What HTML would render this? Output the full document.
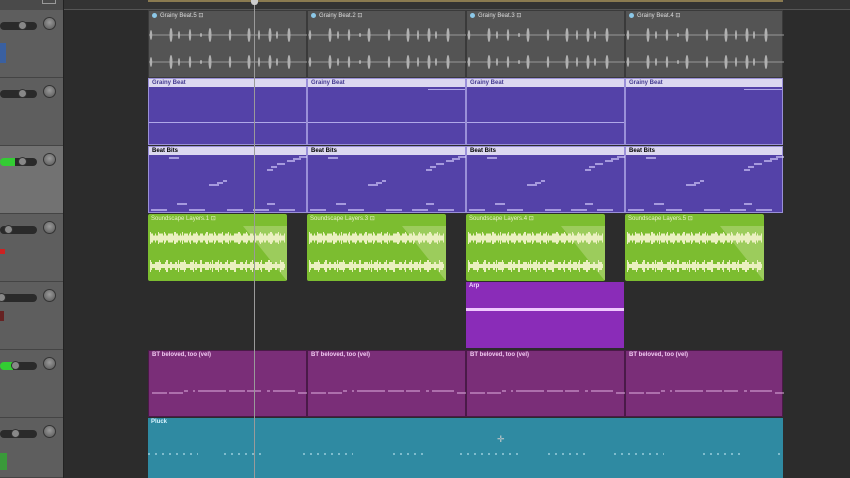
<!DOCTYPE html>
<html><head><meta charset="utf-8"><style>
body{margin:0;width:850px;height:478px;overflow:hidden;background:#2c2c2c;font-family:"Liberation Sans",sans-serif;position:relative}
div{position:absolute;box-sizing:border-box}
.lp{left:0;width:63px;background:#5e5e5e;border-bottom:1px solid #444}
.fader{left:0;width:37px;height:8px;background:#2a2a2a;border-radius:4px}
.knob{left:43px;width:13px;height:13px;border-radius:50%;background:radial-gradient(circle at 50% 40%,#9a9a9a,#555);border:1px solid #333}
.thumb{width:9px;height:9px;border-radius:50%;background:#888;border:1px solid #333}
.t{font-size:6px;font-weight:bold;left:3px;top:1px;white-space:nowrap}
.g{background:#545454;border:1px solid #3a3a3a}
.p{background:#5442a8;border:1px solid #9a90d8}
.ph{left:0;right:0;top:0;height:8px;background:#dcd8f0;color:#443a90}
.gr{background:#7cbd30;border-radius:2px;overflow:hidden}
.m{background:#7a2e78;border:1px solid #4a1a48}
.c{background:#2f8aa2}
</style></head><body>
<div style="left:64px;top:0;width:786px;height:10px;background:#333;border-bottom:1px solid #555"></div>
<div style="left:148px;top:0;width:635px;height:2px;background:#8a7a50"></div>
<div style="left:0;top:0;width:63px;height:10px;background:#4a4a4a"></div>
<div style="left:42px;top:0;width:14px;height:4px;border:1px solid #999;border-top:none"></div>
<div class="lp" style="top:10px;height:68px"></div>
<div class="lp" style="top:78px;height:68px"></div>
<div class="lp" style="top:146px;height:68px;background:#727272"></div>
<div class="lp" style="top:214px;height:68px"></div>
<div class="lp" style="top:282px;height:68px"></div>
<div class="lp" style="top:350px;height:68px"></div>
<div class="lp" style="top:418px;height:60px"></div>
<div style="left:63px;top:0;width:1px;height:478px;background:#222"></div>
<div class="fader" style="top:22px"></div><div class="thumb" style="left:18px;top:21px"></div><div class="knob" style="top:17px"></div>
<div style="left:0;top:43px;width:6px;height:20px;background:#3a60a0"></div>
<div class="fader" style="top:90px"></div><div class="thumb" style="left:18px;top:89px"></div><div class="knob" style="top:85px"></div>
<div class="fader" style="top:158px;background:linear-gradient(90deg,#3c3 0,#3c3 40%,#2a2a2a 40%)"></div><div class="thumb" style="left:18px;top:157px"></div><div class="knob" style="top:153px"></div>
<div class="fader" style="top:226px"></div><div class="thumb" style="left:4px;top:225px"></div><div class="knob" style="top:221px"></div>
<div style="left:0;top:249px;width:5px;height:5px;background:#c22"></div>
<div class="fader" style="top:294px"></div><div class="thumb" style="left:-3px;top:293px"></div><div class="knob" style="top:289px"></div>
<div style="left:0;top:311px;width:4px;height:10px;background:#622"></div>
<div class="fader" style="top:362px;background:linear-gradient(90deg,#3c3 0,#3c3 35%,#2a2a2a 35%)"></div><div class="thumb" style="left:11px;top:361px"></div><div class="knob" style="top:357px"></div>
<div class="fader" style="top:430px"></div><div class="thumb" style="left:11px;top:429px"></div><div class="knob" style="top:425px"></div>
<div style="left:0;top:453px;width:7px;height:17px;background:#3a9a3a"></div>

<svg style="position:absolute;left:0;top:0" width="0" height="0"><defs>
<g id="sp"><path d="M0 24h158M0 51h158" stroke="#999" stroke-width="1"/>
<g fill="#b0b0b0"><ellipse cx="2" cy="24" rx="1.2" ry="5"/><ellipse cx="22" cy="24" rx="1.5" ry="7"/><ellipse cx="30" cy="24" rx="1" ry="4"/><ellipse cx="41" cy="24" rx="1.2" ry="6"/><ellipse cx="52" cy="24" rx="1" ry="2"/><ellipse cx="61" cy="24" rx="1.5" ry="7"/><ellipse cx="81" cy="24" rx="1.2" ry="6"/><ellipse cx="100" cy="24" rx="1.5" ry="7"/><ellipse cx="110" cy="24" rx="1" ry="5"/><ellipse cx="121" cy="24" rx="1.5" ry="7"/><ellipse cx="128" cy="24" rx="1" ry="4"/><ellipse cx="140" cy="24" rx="1.5" ry="7"/>
<ellipse cx="2" cy="51" rx="1.2" ry="5"/><ellipse cx="22" cy="51" rx="1.5" ry="7"/><ellipse cx="30" cy="51" rx="1" ry="4"/><ellipse cx="41" cy="51" rx="1.2" ry="6"/><ellipse cx="52" cy="51" rx="1" ry="2"/><ellipse cx="61" cy="51" rx="1.5" ry="7"/><ellipse cx="81" cy="51" rx="1.2" ry="6"/><ellipse cx="100" cy="51" rx="1.5" ry="7"/><ellipse cx="110" cy="51" rx="1" ry="5"/><ellipse cx="121" cy="51" rx="1.5" ry="7"/><ellipse cx="128" cy="51" rx="1" ry="4"/><ellipse cx="140" cy="51" rx="1.5" ry="7"/></g></g>
<g id="gw">
<polygon points="95,12 139,12 139,67" fill="#9ccc5c"/>
<g stroke="#eaf0c0" fill="none">
<path d="M2 24h135" stroke-width="5"/>
<path d="M2 24h135" stroke-width="9" stroke-dasharray="3 2 1 3 4 1 2 2 5 2"/>
<path d="M2 24h135" stroke-width="12" stroke-dasharray="1 7 1 5 1 9 2 6"/>
<path d="M2 52h135" stroke-width="4"/>
<path d="M2 52h135" stroke-width="8" stroke-dasharray="2 3 4 1 1 4 3 2 2 3"/>
<path d="M2 52h135" stroke-width="12" stroke-dasharray="1 8 1 6 2 10 1 5"/>
</g></g>
<g id="bb" stroke="#d8d0ff" stroke-width="1.3">
<path d="M20 11h10M160 10h-10M144 12h8M138 14h8M128 17h8M122 20h6M118 23h6M60 38h10M68 36h6M74 34h4M28 57h10M2 63h16M40 63h16M78 63h16M104 63h16M118 57h8M130 63h16"/></g>
<g id="bt" stroke="#e0b0e0" stroke-width="1"><path d="M3 42h15M20 42h14M35 40h4M44 40h2M49 40h28M80 40h16M98 40h14M118 40h3M124 40h22M149 42h9"/></g>
</defs></svg>

<div class="g" style="left:148px;top:10px;width:159px;height:68px"><svg width="158" height="68" style="position:absolute;left:0;top:0"><use href="#sp"/></svg><div style="left:3px;top:2px;width:5px;height:5px;border-radius:50%;background:#8cc8e8"></div><div class="t" style="left:11px;color:#ddd;font-weight:normal">Grainy Beat.5 ⊡</div></div>
<div class="g" style="left:307px;top:10px;width:159px;height:68px"><svg width="158" height="68" style="position:absolute;left:0;top:0"><use href="#sp"/></svg><div style="left:3px;top:2px;width:5px;height:5px;border-radius:50%;background:#8cc8e8"></div><div class="t" style="left:11px;color:#ddd;font-weight:normal">Grainy Beat.2 ⊡</div></div>
<div class="g" style="left:466px;top:10px;width:159px;height:68px"><svg width="158" height="68" style="position:absolute;left:0;top:0"><use href="#sp"/></svg><div style="left:3px;top:2px;width:5px;height:5px;border-radius:50%;background:#8cc8e8"></div><div class="t" style="left:11px;color:#ddd;font-weight:normal">Grainy Beat.3 ⊡</div></div>
<div class="g" style="left:625px;top:10px;width:158px;height:68px"><svg width="158" height="68" style="position:absolute;left:0;top:0"><use href="#sp"/></svg><div style="left:3px;top:2px;width:5px;height:5px;border-radius:50%;background:#8cc8e8"></div><div class="t" style="left:11px;color:#ddd;font-weight:normal">Grainy Beat.4 ⊡</div></div>

<div class="p" style="left:148px;top:78px;width:159px;height:67px"><div class="ph"></div><div class="t" style="color:#443a90">Grainy Beat</div><div style="left:0;right:0;top:43px;height:1px;background:#b0a8e8"></div></div>
<div class="p" style="left:307px;top:78px;width:159px;height:67px"><div class="ph"></div><div class="t" style="color:#443a90">Grainy Beat</div><div style="left:0;right:0;top:43px;height:1px;background:#b0a8e8"></div><div style="left:120px;right:0;top:10px;height:1px;background:#b0a8e8"></div></div>
<div class="p" style="left:466px;top:78px;width:159px;height:67px"><div class="ph"></div><div class="t" style="color:#443a90">Grainy Beat</div><div style="left:0;right:0;top:43px;height:1px;background:#b0a8e8"></div></div>
<div class="p" style="left:625px;top:78px;width:158px;height:67px"><div class="ph"></div><div class="t" style="color:#443a90">Grainy Beat</div><div style="left:118px;right:0;top:10px;height:1px;background:#b0a8e8"></div></div>

<div class="p" style="left:148px;top:146px;width:159px;height:67px"><div class="ph"></div><div class="t">Beat Bits</div><svg width="158" height="67" style="position:absolute;left:0;top:0"><use href="#bb"/></svg></div>
<div class="p" style="left:307px;top:146px;width:159px;height:67px"><div class="ph"></div><div class="t">Beat Bits</div><svg width="158" height="67" style="position:absolute;left:0;top:0"><use href="#bb"/></svg></div>
<div class="p" style="left:466px;top:146px;width:159px;height:67px"><div class="ph"></div><div class="t">Beat Bits</div><svg width="158" height="67" style="position:absolute;left:0;top:0"><use href="#bb"/></svg></div>
<div class="p" style="left:625px;top:146px;width:158px;height:67px"><div class="ph"></div><div class="t">Beat Bits</div><svg width="158" height="67" style="position:absolute;left:0;top:0"><use href="#bb"/></svg></div>

<div class="gr" style="left:148px;top:214px;width:139px;height:67px"><svg width="139" height="67" style="position:absolute;left:0;top:0"><use href="#gw"/></svg><div class="t" style="color:#e8f0c8;font-weight:normal">Soundscape Layers.1 ⊡</div></div>
<div class="gr" style="left:307px;top:214px;width:139px;height:67px"><svg width="139" height="67" style="position:absolute;left:0;top:0"><use href="#gw"/></svg><div class="t" style="color:#e8f0c8;font-weight:normal">Soundscape Layers.3 ⊡</div></div>
<div class="gr" style="left:466px;top:214px;width:139px;height:67px"><svg width="139" height="67" style="position:absolute;left:0;top:0"><use href="#gw"/></svg><div class="t" style="color:#e8f0c8;font-weight:normal">Soundscape Layers.4 ⊡</div></div>
<div class="gr" style="left:625px;top:214px;width:139px;height:67px"><svg width="139" height="67" style="position:absolute;left:0;top:0"><use href="#gw"/></svg><div class="t" style="color:#e8f0c8;font-weight:normal">Soundscape Layers.5 ⊡</div></div>

<div style="left:466px;top:282px;width:158px;height:66px;background:#8a2cb8"><div class="t" style="color:#f0d8ff">Arp</div><div style="left:0;right:0;top:26px;height:3px;background:#f0c8ff"></div></div>

<div class="m" style="left:148px;top:350px;width:159px;height:67px"><div class="t" style="color:#f0c8f0">BT beloved, too (vel)</div><svg width="158" height="67" style="position:absolute;left:0;top:0"><use href="#bt"/></svg></div>
<div class="m" style="left:307px;top:350px;width:159px;height:67px"><div class="t" style="color:#f0c8f0">BT beloved, too (vel)</div><svg width="158" height="67" style="position:absolute;left:0;top:0"><use href="#bt"/></svg></div>
<div class="m" style="left:466px;top:350px;width:159px;height:67px"><div class="t" style="color:#f0c8f0">BT beloved, too (vel)</div><svg width="158" height="67" style="position:absolute;left:0;top:0"><use href="#bt"/></svg></div>
<div class="m" style="left:625px;top:350px;width:158px;height:67px"><div class="t" style="color:#f0c8f0">BT beloved, too (vel)</div><svg width="158" height="67" style="position:absolute;left:0;top:0"><use href="#bt"/></svg></div>

<div class="c" style="left:148px;top:418px;width:635px;height:60px"><div class="t" style="color:#d8f4ff">Pluck</div>
<svg width="635" height="60" style="position:absolute;left:0;top:0" stroke="#cfeff8" stroke-width="1" stroke-dasharray="2 5"><path d="M0 36h50M76 36h40M155 36h50M245 36h30M312 36h60M400 36h40M466 36h50M555 36h40M630 36h5"/></svg>
<div style="left:349px;top:16px;color:#ccc;font-size:9px">✛</div></div>

<div style="left:254px;top:0;width:1px;height:478px;background:#9a9a9a"></div>
<div style="left:251px;top:0;width:7px;height:5px;background:#ccc;border-radius:0 0 3px 3px"></div>
</body></html>
